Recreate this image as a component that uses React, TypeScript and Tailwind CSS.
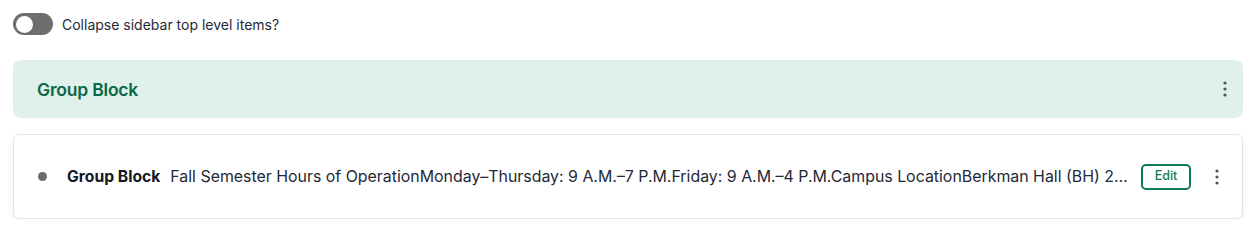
import React from "react";

function Kebab() {
  return (
    <svg width="4" height="16" viewBox="0 0 4 16" className="fill-[#4b5563]">
      <circle cx="2" cy="2" r="1.6" />
      <circle cx="2" cy="8" r="1.6" />
      <circle cx="2" cy="14" r="1.6" />
    </svg>
  );
}

export default function App() {
  return (
    <div className="w-[1246px] bg-white pl-[13px] pr-[3px] pt-[13px] text-[#1f2937]" style={{ fontFamily: "Inter, 'Noto Sans', sans-serif" }}>
      <div className="flex items-center gap-[9px] h-[22px]">
        <div className="w-[40px] h-[22px] rounded-full bg-[#6e6e6e] flex items-center px-[3px]">
          <div className="w-[17px] h-[17px] rounded-full bg-white" />
        </div>
        <span className="text-[14px] text-[#1f2937]">Collapse sidebar top level items?</span>
      </div>

      <div className="mt-[25px] h-[58px] rounded-[8px] bg-[#e0f0ea] flex items-center pl-[24px] pr-[16px]">
        <span className="flex-1 text-[17.5px] font-semibold text-[#0b6847] tracking-[-0.2px] pt-[3px]">Group Block</span>
        <Kebab />
      </div>

      <div className="mt-[16px] h-[85px] rounded-[6px] border border-[#e2e4e8] bg-white shadow-[0_2px_6px_rgba(0,0,0,0.06)] flex items-center pl-[24px] pr-[23px]">
        <div className="w-[9px] h-[9px] rounded-full bg-[#6b6b70] shrink-0" />
        <span className="ml-[20px] text-[15.7px] font-bold shrink-0 text-[#111827]">Group Block</span>
        <span className="ml-[10px] text-[15.9px] truncate min-w-0 flex-1 text-[#1f2937]">
          Fall Semester Hours of OperationMonday–Thursday: 9 A.M.–7 P.M.Friday: 9 A.M.–4 P.M.Campus LocationBerkman Hall (BH) 211, 2nd Floor Contact Us
        </span>
        <button className="ml-[11px] w-[50px] h-[26px] rounded-[5px] border-2 border-[#0b7d56] text-[#0b7d56] text-[12.5px] font-medium flex items-center justify-center shrink-0">
          Edit
        </button>
        <div className="ml-[24px]">
          <Kebab />
        </div>
      </div>
    </div>
  );
}
